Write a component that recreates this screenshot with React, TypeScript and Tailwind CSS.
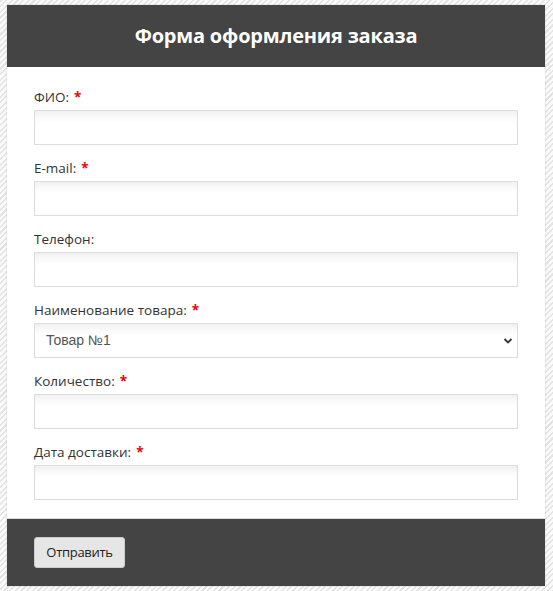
import React from "react";

const fields: { label: string; required: boolean; select?: boolean }[] = [
  { label: "ФИО:", required: true },
  { label: "E-mail:", required: true },
  { label: "Телефон:", required: false },
  { label: "Наименование товара:", required: true, select: true },
  { label: "Количество:", required: true },
  { label: "Дата доставки:", required: true },
];

export default function App() {
  return (
    <div className="w-full min-h-[591px] bg-[repeating-linear-gradient(135deg,#e4e4e4_0px,#e4e4e4_1.5px,#fafafa_1.5px,#fafafa_4px)] pt-[5px] pl-[7px] pr-[8px] pb-[5px]">
      <div className="w-[538px] bg-white shadow-[0_0_2px_rgba(0,0,0,0.15)]">
        <div className="h-[62px] bg-[#444444] flex items-center justify-center">
          <h1 className="text-white font-bold text-[20px] font-['Open_Sans',sans-serif] tracking-[-0.2px]">
            Форма оформления заказа
          </h1>
        </div>
        <div className="px-[27px] pt-[22px] pb-[3px] font-['Open_Sans',sans-serif]">
          {fields.map((f) => (
            <div key={f.label} className="mb-[15px]">
              <label className="block h-[18px] mb-[3px] text-[13.5px] leading-[17px] text-[#333333]">
                {f.label}
                {f.required && <span className="text-[#ee0000] font-bold ml-[5px]">*</span>}
              </label>
              {f.select ? (
                <div className="relative h-[35px] border border-[#dddddd] bg-white shadow-[inset_0_10px_10px_-6px_rgba(0,0,0,0.07)] flex items-center">
                  <span className="pl-[11px] text-[14px] text-[#555555] font-['Liberation_Sans',sans-serif]">Товар №1</span>
                  <svg className="absolute right-[4px] top-[13px]" width="10" height="8" viewBox="0 0 10 8">
                    <path d="M1.5 2 L5 5.5 L8.5 2" fill="none" stroke="#333" strokeWidth="1.8" />
                  </svg>
                </div>
              ) : (
                <div className="h-[35px] border border-[#dddddd] bg-white shadow-[inset_0_10px_10px_-6px_rgba(0,0,0,0.07)]" />
              )}
            </div>
          ))}
        </div>
        <div className="h-[68px] bg-[#444444] border-t border-[#dcdcdc] flex items-center px-[27px]">
          <button className="h-[31px] w-[91px] rounded-[3px] bg-[#e6e6e6] border border-[#cccccc] text-[13px] tracking-[-0.3px] text-[#222222] font-['Open_Sans',sans-serif]">
            Отправить
          </button>
        </div>
      </div>
    </div>
  );
}
